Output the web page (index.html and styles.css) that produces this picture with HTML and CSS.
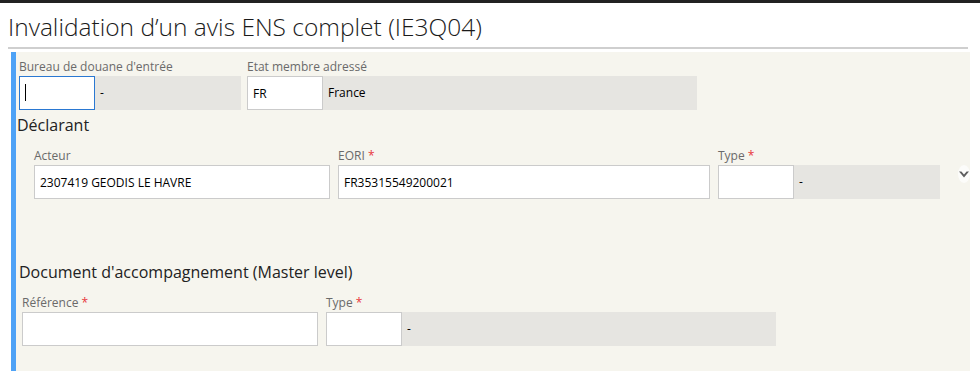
FILE: index.html
```html
<!DOCTYPE html>
<html lang="fr">

<head>
  <meta charset="UTF-8" />
  <title>Invalidation d'un avis ENS complet</title>
  <link rel="stylesheet" href="styles.css">
</head>

<body>
  <div class="page">
    <h1 class="page-title">Invalidation d’un avis ENS complet (IE3Q04)</h1>

    <div class="panel">
      <!-- Bureau / Etat membre -->
      <div class="row">
        <div class="field">
          <label>Bureau de douane d'entrée</label>
          <div class="combo">
            <input class="code focused" type="text" value="">
            <span class="caret"></span>
            <div class="desc w146">-</div>
          </div>
        </div>
        <div class="field">
          <label>Etat membre adressé</label>
          <div class="combo">
            <input class="code" type="text" value="FR">
            <div class="desc w374">France</div>
          </div>
        </div>
      </div>

      <!-- Déclarant -->
      <h3 class="section-title">Déclarant</h3>
      <div class="section-body">
        <div class="row">
          <div class="field">
            <label>Acteur</label>
            <input class="text w296" type="text" value="2307419 GEODIS LE HAVRE">
          </div>
          <div class="field">
            <label>EORI <span class="req">*</span></label>
            <input class="text w372" type="text" value="FR35315549200021">
          </div>
          <div class="field">
            <label>Type <span class="req">*</span></label>
            <div class="combo">
              <input class="code" type="text" value="">
              <div class="desc w146">-</div>
            </div>
          </div>
          <div class="toggle">
            <svg width="10" height="7" viewBox="0 0 10 7">
              <path d="M0 0.5 L5 6.5 L10 0.5 L7.6 0.5 L5 3.6 L2.4 0.5 Z" fill="#5e5e5e" />
            </svg>
          </div>
        </div>
      </div>

      <!-- Document d'accompagnement -->
      <h3 class="section-title doc-title">Document d'accompagnement (Master level)</h3>
      <div class="doc-body">
        <div class="row">
          <div class="field">
            <label>Référence <span class="req">*</span></label>
            <input class="text w296" type="text" value="">
          </div>
          <div class="field">
            <label>Type <span class="req">*</span></label>
            <div class="combo">
              <input class="code" type="text" value="">
              <div class="desc w374">-</div>
            </div>
          </div>
        </div>
      </div>
    </div>
  </div>
</body>

</html>
```

FILE: styles.css
```css
body {
  margin: 0;
  background-color: #ffffff;
  font-family: "Open Sans", "Noto Sans", Arial, sans-serif;
  color: #000000;
}

.page {
  border-top: 3px solid #222222;
}

/* titre de la page */
.page-title {
  margin: 0 12px 0 8px;
  padding: 9px 0 5px 0;
  font-size: 24.5px;
  font-weight: 300;
  line-height: 30px;
  color: #1a1a1a;
  border-bottom: 2px solid #cfcfcf;
}

/* bloc du formulaire */
.panel {
  margin: 3px 10px 0 11px;
  padding: 7px 0 25px 3px;
  background-color: #f6f5ee;
  border-left: 5px solid #4ea2f6;
}

.row {
  display: flex;
  align-items: flex-end;
  gap: 6px;
}

.field {
  display: flex;
  flex-direction: column;
}

.field label {
  font-size: 12px;
  line-height: 15px;
  color: #6a6a6a;
  margin-bottom: 2px;
}

.req {
  color: #e8363c;
}

.combo {
  display: flex;
  position: relative;
}

input {
  box-sizing: border-box;
  height: 34px;
  margin: 0;
  padding: 0 5px;
  border: 1px solid #cbcbcb;
  background-color: #ffffff;
  font-family: inherit;
  font-size: 12px;
  color: #000000;
  outline: none;
}

input.code {
  width: 76px;
}

input.focused {
  border-color: #2a78d2;
}

/* curseur de saisie */
.caret {
  position: absolute;
  left: 6px;
  top: 8px;
  width: 1px;
  height: 17px;
  background-color: #000000;
}

.desc {
  height: 34px;
  line-height: 34px;
  padding-left: 5px;
  box-sizing: border-box;
  background-color: #e6e5e1;
  font-size: 12px;
}

.w146 { width: 146px; }
.w374 { width: 374px; }
.w296 { width: 296px; }
.w372 { width: 372px; }

.section-title {
  margin: 5px 0 0 -2px;
  font-size: 16px;
  font-weight: 400;
  line-height: 20px;
  color: #222222;
}

.section-body {
  padding: 13px 0 0 15px;
}

.section-body .row {
  gap: 8px;
}

.toggle {
  width: 18px;
  height: 18px;
  margin: 0 0 16px 10px;
  border-radius: 50%;
  background-color: #fcfcfa;
  display: flex;
  align-items: center;
  justify-content: center;
}

.doc-title {
  margin: 63px 0 0 0;
}

.doc-body {
  padding: 13px 0 0 3px;
}

.doc-body .row {
  gap: 8px;
}
```
